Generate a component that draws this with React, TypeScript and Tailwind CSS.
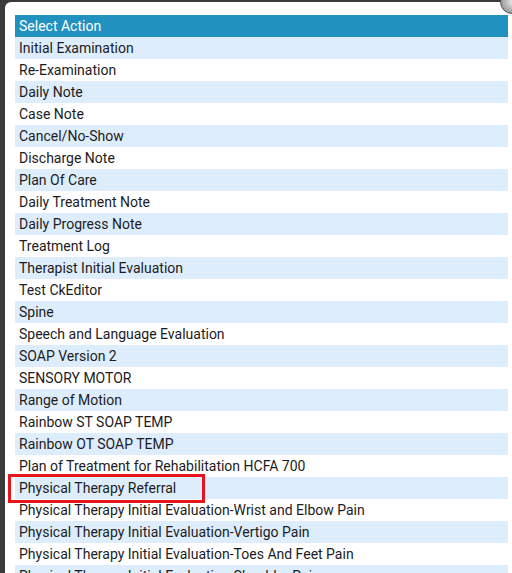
const items = [
  "Initial Examination",
  "Re-Examination",
  "Daily Note",
  "Case Note",
  "Cancel/No-Show",
  "Discharge Note",
  "Plan Of Care",
  "Daily Treatment Note",
  "Daily Progress Note",
  "Treatment Log",
  "Therapist Initial Evaluation",
  "Test CkEditor",
  "Spine",
  "Speech and Language Evaluation",
  "SOAP Version 2",
  "SENSORY MOTOR",
  "Range of Motion",
  "Rainbow ST SOAP TEMP",
  "Rainbow OT SOAP TEMP",
  "Plan of Treatment for Rehabilitation HCFA 700",
  "Physical Therapy Referral",
  "Physical Therapy Initial Evaluation-Wrist and Elbow Pain",
  "Physical Therapy Initial Evaluation-Vertigo Pain",
  "Physical Therapy Initial Evaluation-Toes And Feet Pain",
  "Physical Therapy Initial Evaluation-Shoulder Pain",
];

export default function App() {
  return (
    <div className="relative h-[573px] w-[512px] overflow-hidden bg-[#3a3a3a] pl-[5px] pt-[2px] font-['Roboto',sans-serif] text-[14px]">
      <div className="relative h-full rounded-tl-[6px] bg-white pl-[10px] pr-[4px] pt-[13px]">
        <ul className="text-[#1c1c24]">
          <li className="h-[22px] bg-[#2191c0] pl-[4px] leading-[22px] text-white">Select Action</li>
          {items.map((item, i) => (
            <li
              key={item}
              className={`h-[22px] pl-[4px] leading-[22px] whitespace-nowrap ${i % 2 === 0 ? "bg-[#deedfb]" : "bg-white"}`}
            >
              {item}
            </li>
          ))}
        </ul>
        {/* highlight box */}
        <div className="absolute left-[3px] top-[472px] h-[29px] w-[197px] border-[3px] border-[#e8141c]" />
      </div>
      {/* close button */}
      <div className="absolute -right-[12px] -top-[10px] h-[24px] w-[24px] rounded-full border border-[#555] bg-[radial-gradient(circle,#e8e8e8,#7a7a7a)]" />
    </div>
  );
}
